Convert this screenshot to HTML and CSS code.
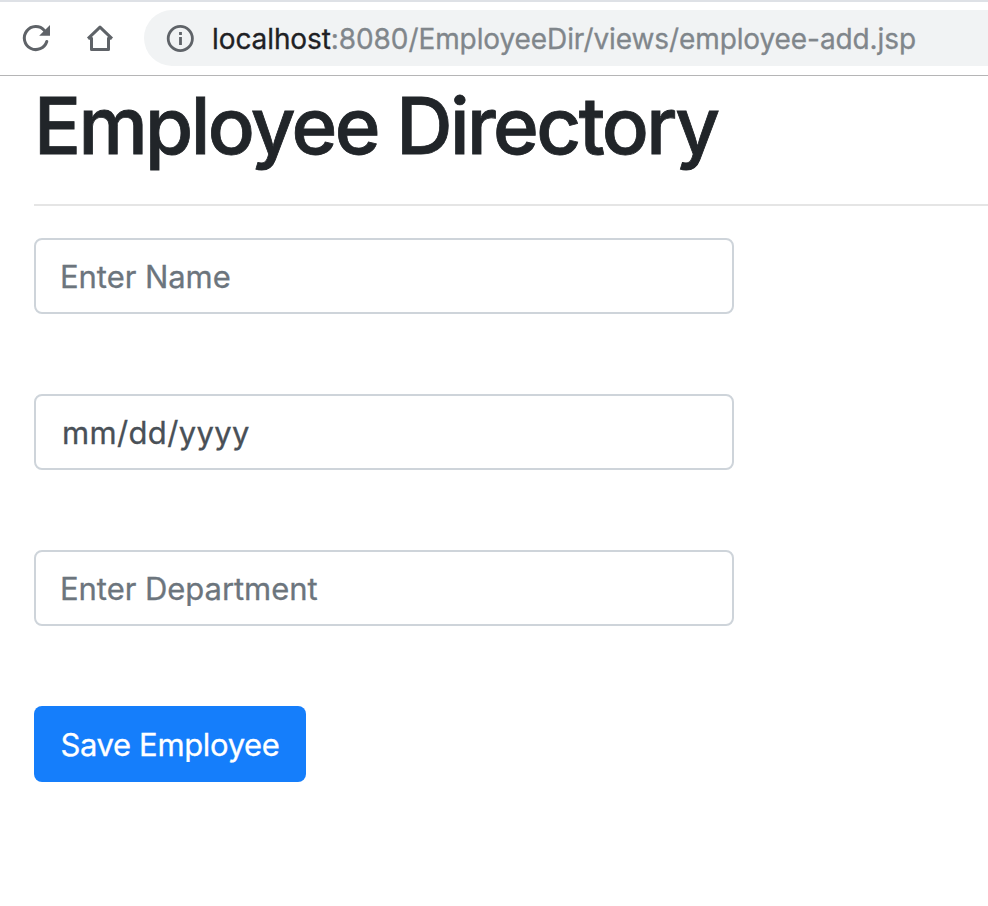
FILE: index.html
```html
<!DOCTYPE html>
<html lang="en">
<head>
<meta charset="utf-8">
<title>Employee Directory</title>
<link rel="stylesheet" href="styles.css">
</head>
<body>
<header class="toolbar">
  <svg class="icon" width="32" height="32" viewBox="0 0 32 32" fill="none" stroke="#5f6368" stroke-width="3"><path d="M26.800 19.500A11.500 11.500 0 1 1 24.400 8.400" stroke-linecap="round"/><path d="M30 3V13.800H19.200Z" fill="#5f6368" stroke="none"/></svg>
  <svg class="icon" width="32" height="32" viewBox="0 0 32 32" fill="none" stroke="#5f6368" stroke-width="3"><path d="M4 16.600L16 5.200L28 16.600M4.500 16.200H7.500V27.500H24.500V16.200H27.500" stroke-linejoin="round"/></svg>
  <div class="address">
    <svg class="info" width="28" height="28" viewBox="0 0 28 28" fill="none" stroke="#5f6368" stroke-width="2.800"><circle cx="14.300" cy="14.500" r="12.100"/><path d="M14.500 13v8M14.500 8v3"/></svg>
    <span class="url"><span class="host">localhost</span>:8080/EmployeeDir/views/employee-add.jsp</span>
  </div>
</header>
<main class="page">
  <h1 class="title"><span>Employee Directory</span></h1>
  <hr class="rule">
  <form class="form">
    <div class="field"><span class="name">Enter Name</span></div>
    <div class="field date"><span>mm/dd/yyyy</span></div>
    <div class="field"><span class="department">Enter Department</span></div>
    <button class="save" type="button"><span>Save Employee</span></button>
  </form>
</main>
</body>
</html>
```

FILE: styles.css
```css
* { box-sizing: border-box; }
body { margin: 0; background: #fff; font-family: Inter, sans-serif; overflow: hidden; }
.toolbar { display: flex; align-items: center; height: 76px; padding: 0 0 1px 20px; gap: 32px; border-top: 2px solid #dee1e6; border-bottom: 1px solid #b5b5b6; }
.icon, .info { flex: none; }
.address { display: flex; flex: 1; align-items: center; height: 56px; margin-left: -4px; padding-left: 22px; gap: 18px; background: #f1f3f4; border-radius: 28px 0 0 28px; white-space: nowrap; }
.url { padding-top: 1px; font: 28px/36px Inter, sans-serif; letter-spacing: -.09px; color: #80868b; -webkit-text-stroke: .3px; }
.host { color: #202124; }
.page { padding-left: 34px; }
.title { margin: 0; height: 128px; padding-top: 2px; font-size: 78px; line-height: 96px; font-weight: 550; letter-spacing: -2.6px; color: #212529; white-space: nowrap; -webkit-text-stroke: .8px; }
.rule { margin: 0 0 32px; border: 0; border-top: 2px solid #e5e5e5; }
.form { display: flex; flex-direction: column; align-items: flex-start; gap: 80px; }
.field { width: 700px; height: 76px; padding: 0 24px; border: 2px solid #ced4da; border-radius: 8px; font-size: 31px; line-height: 74px; letter-spacing: -.05px; color: #6c757d; -webkit-text-stroke: .3px; }
.date { padding-left: 26px; letter-spacing: .35px; color: #495057; }
.save { width: 272px; height: 76px; padding: 1px 0 0; border: 0; border-radius: 8px; background: #157efb; color: #fff; font: 31px/75px Inter, sans-serif; letter-spacing: -.35px; -webkit-text-stroke: .3px; }
```
